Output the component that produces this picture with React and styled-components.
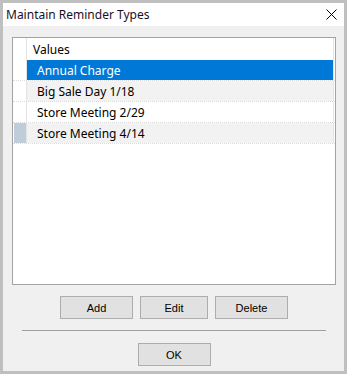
import React from 'react'
import styled, { createGlobalStyle } from 'styled-components'

const GlobalStyle = createGlobalStyle`
  html, body {
    margin: 0;
    padding: 0;
    background: #ffffff;
  }
`

const Window = styled.div`
  width: 347px;
  height: 374px;
  box-sizing: border-box;
  border: 3px solid #bfbfbf;
  background: #f0f0f0;
  display: flex;
  flex-direction: column;
  font-family: 'Noto Sans', 'Open Sans', sans-serif;
`

const TitleBar = styled.div`
  height: 23px;
  background: #ffffff;
  display: flex;
  align-items: center;
  justify-content: space-between;
  padding: 0 7px 0 3px;
`

const Title = styled.span`
  font-size: 12px;
  color: #1a0f1f;
`

const CloseButton = styled.svg`
  width: 11px;
  height: 11px;
  display: block;
`

const Body = styled.div`
  flex: 1;
  display: flex;
  flex-direction: column;
  align-items: center;
  padding: 11px 8px 0 9px;
`

const ListBox = styled.div`
  width: 324px;
  height: 248px;
  box-sizing: border-box;
  border: 1px solid #a3a3a3;
  background: #ffffff;
  font-size: 12px;
`

const Row = styled.div`
  display: flex;
  height: ${({ $header }) => ($header ? '22px' : '20px')};
  border-bottom: ${({ $header }) => ($header ? 'none' : '1px dotted #dcdcdc')};
`

const RowHeader = styled.div`
  width: 12px;
  padding-left: 1px;
  border-right: 1px solid #e3e3e3;
  display: flex;
`

const Marker = styled.div`
  flex: 1;
  background: ${({ $current }) => ($current ? '#bfcddb' : 'transparent')};
`

const Cell = styled.div`
  flex: 1;
  display: flex;
  align-items: center;
  padding-left: ${({ $header }) => ($header ? '6px' : '10px')};
  margin-right: 1px;
  border-right: 1px solid #e3e3e3;
  color: ${({ $selected }) => ($selected ? '#ffffff' : '#000000')};
  background: ${({ $selected, $alt }) =>
    $selected ? '#0078d7' : $alt ? '#f2f2f2' : '#ffffff'};
`

const ButtonRow = styled.div`
  margin-top: 11px;
  display: flex;
  gap: 7px;
`

const Button = styled.button`
  width: ${({ $w }) => $w || 73}px;
  height: 23px;
  box-sizing: border-box;
  border: 1px solid #adadad;
  background: #e1e1e1;
  font-family: 'Liberation Sans', Arial, sans-serif;
  font-size: 11px;
  color: #000000;
  padding: 0;
`

const Separator = styled.div`
  width: 304px;
  height: 1px;
  background: #a0a0a0;
  margin: 11px 0 12px;
`

const items = ['Annual Charge', 'Big Sale Day 1/18', 'Store Meeting 2/29', 'Store Meeting 4/14']

export default function App() {
  return (
    <>
      <GlobalStyle />
      <Window>
        <TitleBar>
          <Title>Maintain Reminder Types</Title>
          <CloseButton viewBox="0 0 11 11">
            <path d="M0.5 0.5 L10.5 10.5 M10.5 0.5 L0.5 10.5" stroke="#000" strokeWidth="1" />
          </CloseButton>
        </TitleBar>
        <Body>
          <ListBox>
            <Row $header>
              <RowHeader />
              <Cell $header>Values</Cell>
            </Row>
            {items.map((item, i) => (
              <Row key={item}>
                <RowHeader>
                  <Marker $current={i === items.length - 1} />
                </RowHeader>
                <Cell $selected={i === 0} $alt={i % 2 === 1}>
                  {item}
                </Cell>
              </Row>
            ))}
          </ListBox>
          <ButtonRow>
            <Button>Add</Button>
            <Button $w={68}>Edit</Button>
            <Button>Delete</Button>
          </ButtonRow>
          <Separator />
          <Button>OK</Button>
        </Body>
      </Window>
    </>
  )
}
